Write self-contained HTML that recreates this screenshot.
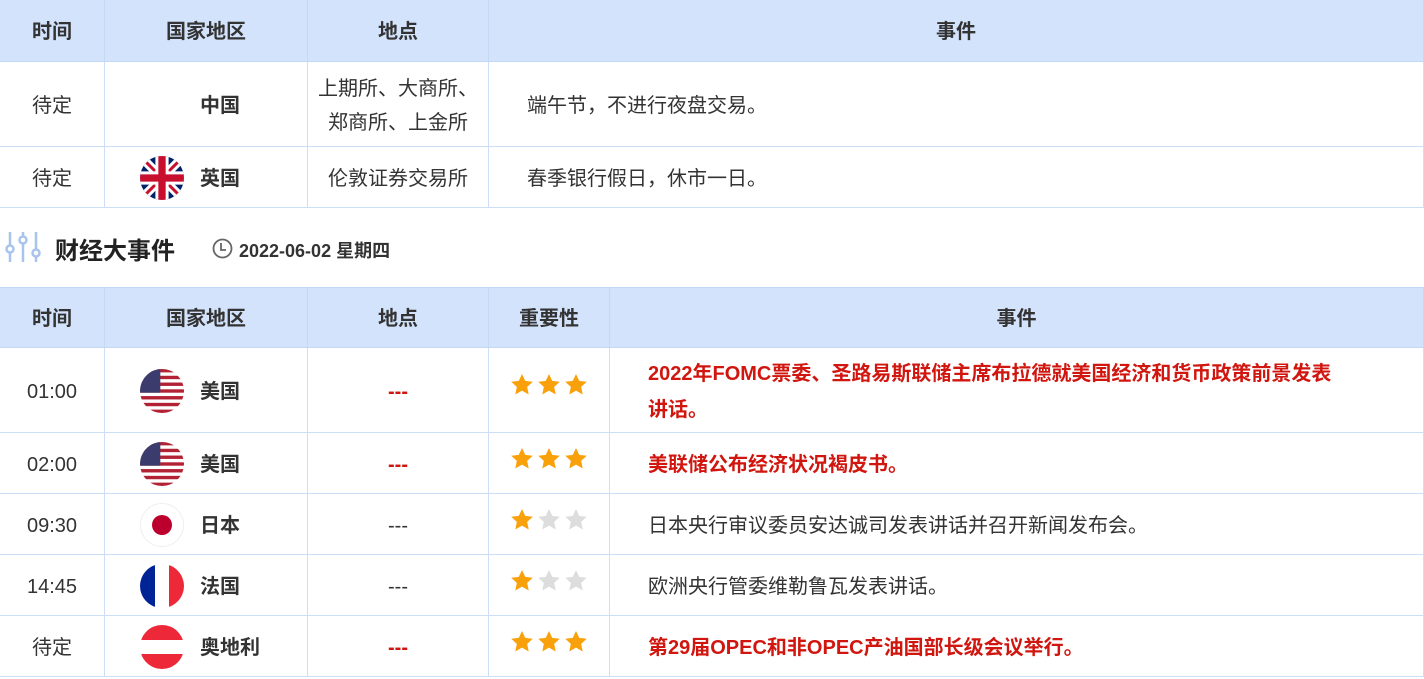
<!DOCTYPE html><html><head><meta charset="utf-8"><style>
*{margin:0;padding:0;box-sizing:border-box}
body{width:1424px;height:679px;overflow:hidden;background:#fff;font-family:"Liberation Sans","Noto Sans CJK SC",sans-serif;color:#333;position:relative}
.c{position:absolute;display:flex;align-items:center;justify-content:center;border-right:1px solid #cddff6;border-bottom:1px solid #cddff6;font-size:20px;text-align:center;line-height:34px;padding-top:3px}
.h{background:#d3e3fc;font-weight:bold;font-size:20px;border-color:#c3d8f5}
.flag{width:44px;height:44px;border-radius:50%;overflow:hidden;position:absolute;left:35px;top:50%;margin-top:-21px}
.nm{position:absolute;left:95px;font-weight:bold;font-size:20px}
.red{color:#d0160f;font-weight:bold}
.st svg{margin:0 1.5px}
.ev{justify-content:flex-start;text-align:left;padding-left:38px;padding-right:78px;font-size:20px}
</style></head><body>
<svg width="0" height="0" style="position:absolute"><defs><path id="s" d="M10 0.8L12.7 6.6L19 7.3L14.3 11.6L15.6 17.9L10 14.7L4.4 17.9L5.7 11.6L1 7.3L7.3 6.6Z"/></defs></svg>
<div class="c h" style="left:0;top:0;width:105px;height:62px">时间</div>
<div class="c h" style="left:105px;top:0;width:203px;height:62px">国家地区</div>
<div class="c h" style="left:308px;top:0;width:181px;height:62px">地点</div>
<div class="c h" style="left:489px;top:0;width:935px;height:62px">事件</div>
<div class="c" style="left:0;top:62px;width:105px;height:85px">待定</div>
<div class="c" style="left:105px;top:62px;width:203px;height:85px"><span class="nm">中国</span></div>
<div class="c" style="left:308px;top:62px;width:181px;height:85px;line-height:34px">上期所、大商所、<br>郑商所、上金所</div>
<div class="c ev" style="left:489px;top:62px;width:935px;height:85px">端午节，不进行夜盘交易。</div>
<div class="c" style="left:0;top:147px;width:105px;height:61px">待定</div>
<div class="c" style="left:105px;top:147px;width:203px;height:61px"><div class="flag"><svg width="44" height="44" viewBox="0 0 60 60"><rect width="60" height="60" fill="#012169"/><path d="M0 0L60 60M60 0L0 60" stroke="#fff" stroke-width="12"/><path d="M0 0L60 60M60 0L0 60" stroke="#c8102e" stroke-width="4"/><path d="M30 0V60M0 30H60" stroke="#fff" stroke-width="18"/><path d="M30 0V60M0 30H60" stroke="#c8102e" stroke-width="10"/></svg></div><span class="nm">英国</span></div>
<div class="c" style="left:308px;top:147px;width:181px;height:61px">伦敦证券交易所</div>
<div class="c ev" style="left:489px;top:147px;width:935px;height:61px">春季银行假日，休市一日。</div>
<svg style="position:absolute;left:5px;top:232px" width="36" height="30" viewBox="0 0 36 30" fill="none" stroke="#a9c4ec" stroke-width="2.5"><path d="M5 0V13M5 21V30M18 0V4M18 12V30M31 0V17M31 25V30"/><circle cx="5" cy="17" r="3.5"/><circle cx="18" cy="8" r="3.5"/><circle cx="31" cy="21" r="3.5"/></svg>
<div style="position:absolute;left:55px;top:231px;font-size:24px;font-weight:bold;color:#222">财经大事件</div>
<svg style="position:absolute;left:212px;top:238px" width="21" height="21" viewBox="0 0 21 21" fill="none" stroke="#666" stroke-width="1.8"><circle cx="10.5" cy="10.5" r="9"/><path d="M9 5V12H14"/></svg>
<div style="position:absolute;left:239px;top:237px;font-size:18px;font-weight:bold;color:#333">2022-06-02 星期四</div>
<div class="c h" style="left:0;top:287px;width:105px;height:61px;border-top:1px solid #c3d8f5">时间</div>
<div class="c h" style="left:105px;top:287px;width:203px;height:61px;border-top:1px solid #c3d8f5">国家地区</div>
<div class="c h" style="left:308px;top:287px;width:181px;height:61px;border-top:1px solid #c3d8f5">地点</div>
<div class="c h" style="left:489px;top:287px;width:121px;height:61px;border-top:1px solid #c3d8f5">重要性</div>
<div class="c h" style="left:610px;top:287px;width:814px;height:61px;border-top:1px solid #c3d8f5">事件</div>

<div class="c" style="left:0;top:348px;width:105px;height:85px">01:00</div>
<div class="c" style="left:105px;top:348px;width:203px;height:85px"><div class="flag"><svg width="44" height="44" viewBox="0 0 26 26"><rect width="26" height="26" fill="#fff"/><g fill="#b22234"><rect y="0" width="26" height="2"/><rect y="4" width="26" height="2"/><rect y="8" width="26" height="2"/><rect y="12" width="26" height="2"/><rect y="16" width="26" height="2"/><rect y="20" width="26" height="2"/><rect y="24" width="26" height="2"/></g><rect width="12" height="14" fill="#3c3b6e"/></svg></div><span class="nm">美国</span></div>
<div class="c red" style="left:308px;top:348px;width:181px;height:85px">---</div>
<div class="c st" style="left:489px;top:348px;width:121px;height:85px;padding-top:0;padding-bottom:10px"><svg width="24" height="24" viewBox="0 0 20 20" fill="#f9a10b"><use href="#s"/></svg><svg width="24" height="24" viewBox="0 0 20 20" fill="#f9a10b"><use href="#s"/></svg><svg width="24" height="24" viewBox="0 0 20 20" fill="#f9a10b"><use href="#s"/></svg></div>
<div class="c ev red" style="left:610px;top:348px;width:814px;height:85px;line-height:36px">2022年FOMC票委、圣路易斯联储主席布拉德就美国经济和货币政策前景发表讲话。</div>

<div class="c" style="left:0;top:433px;width:105px;height:61px">02:00</div>
<div class="c" style="left:105px;top:433px;width:203px;height:61px"><div class="flag"><svg width="44" height="44" viewBox="0 0 26 26"><rect width="26" height="26" fill="#fff"/><g fill="#b22234"><rect y="0" width="26" height="2"/><rect y="4" width="26" height="2"/><rect y="8" width="26" height="2"/><rect y="12" width="26" height="2"/><rect y="16" width="26" height="2"/><rect y="20" width="26" height="2"/><rect y="24" width="26" height="2"/></g><rect width="12" height="14" fill="#3c3b6e"/></svg></div><span class="nm">美国</span></div>
<div class="c red" style="left:308px;top:433px;width:181px;height:61px">---</div>
<div class="c st" style="left:489px;top:433px;width:121px;height:61px;padding-top:0;padding-bottom:8px"><svg width="24" height="24" viewBox="0 0 20 20" fill="#f9a10b"><use href="#s"/></svg><svg width="24" height="24" viewBox="0 0 20 20" fill="#f9a10b"><use href="#s"/></svg><svg width="24" height="24" viewBox="0 0 20 20" fill="#f9a10b"><use href="#s"/></svg></div>
<div class="c ev red" style="left:610px;top:433px;width:814px;height:61px">美联储公布经济状况褐皮书。</div>

<div class="c" style="left:0;top:494px;width:105px;height:61px">09:30</div>
<div class="c" style="left:105px;top:494px;width:203px;height:61px"><div class="flag" style="border:1px solid #eee"><svg width="44" height="44"><rect width="44" height="44" fill="#fff"/><circle cx="21" cy="21" r="10" fill="#bc002d"/></svg></div><span class="nm">日本</span></div>
<div class="c" style="left:308px;top:494px;width:181px;height:61px">---</div>
<div class="c st" style="left:489px;top:494px;width:121px;height:61px;padding-top:0;padding-bottom:8px"><svg width="24" height="24" viewBox="0 0 20 20" fill="#f9a10b"><use href="#s"/></svg><svg width="24" height="24" viewBox="0 0 20 20" fill="#ddd"><use href="#s"/></svg><svg width="24" height="24" viewBox="0 0 20 20" fill="#ddd"><use href="#s"/></svg></div>
<div class="c ev" style="left:610px;top:494px;width:814px;height:61px">日本央行审议委员安达诚司发表讲话并召开新闻发布会。</div>

<div class="c" style="left:0;top:555px;width:105px;height:61px">14:45</div>
<div class="c" style="left:105px;top:555px;width:203px;height:61px"><div class="flag"><svg width="44" height="44"><rect width="15" height="44" fill="#002395"/><rect x="15" width="14" height="44" fill="#fff"/><rect x="29" width="15" height="44" fill="#ed2939"/></svg></div><span class="nm">法国</span></div>
<div class="c" style="left:308px;top:555px;width:181px;height:61px">---</div>
<div class="c st" style="left:489px;top:555px;width:121px;height:61px;padding-top:0;padding-bottom:8px"><svg width="24" height="24" viewBox="0 0 20 20" fill="#f9a10b"><use href="#s"/></svg><svg width="24" height="24" viewBox="0 0 20 20" fill="#ddd"><use href="#s"/></svg><svg width="24" height="24" viewBox="0 0 20 20" fill="#ddd"><use href="#s"/></svg></div>
<div class="c ev" style="left:610px;top:555px;width:814px;height:61px">欧洲央行管委维勒鲁瓦发表讲话。</div>

<div class="c" style="left:0;top:616px;width:105px;height:61px">待定</div>
<div class="c" style="left:105px;top:616px;width:203px;height:61px"><div class="flag"><svg width="44" height="44"><rect width="44" height="15" fill="#ed2939"/><rect y="15" width="44" height="14" fill="#fff"/><rect y="29" width="44" height="15" fill="#ed2939"/></svg></div><span class="nm">奥地利</span></div>
<div class="c red" style="left:308px;top:616px;width:181px;height:61px">---</div>
<div class="c st" style="left:489px;top:616px;width:121px;height:61px;padding-top:0;padding-bottom:8px"><svg width="24" height="24" viewBox="0 0 20 20" fill="#f9a10b"><use href="#s"/></svg><svg width="24" height="24" viewBox="0 0 20 20" fill="#f9a10b"><use href="#s"/></svg><svg width="24" height="24" viewBox="0 0 20 20" fill="#f9a10b"><use href="#s"/></svg></div>
<div class="c ev red" style="left:610px;top:616px;width:814px;height:61px">第29届OPEC和非OPEC产油国部长级会议举行。</div>
</body></html>
